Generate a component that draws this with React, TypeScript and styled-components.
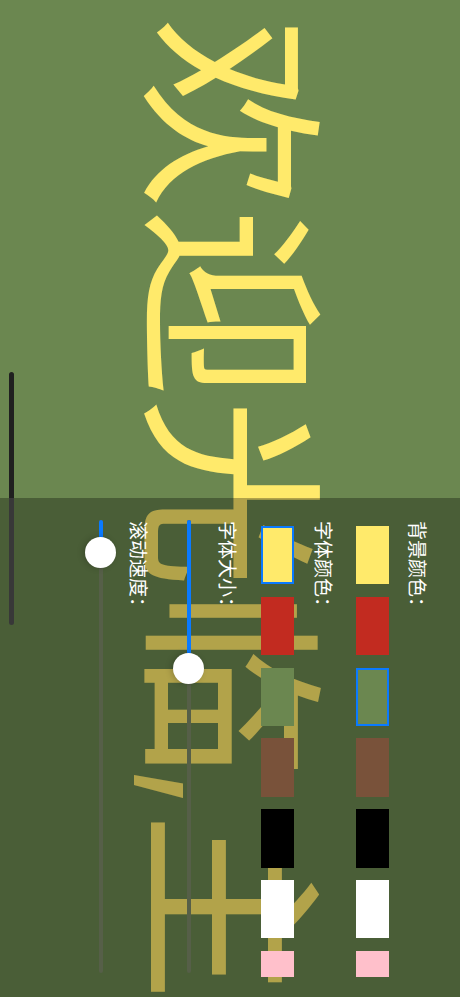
import React from "react";
import styled, { createGlobalStyle } from "styled-components";

const GlobalStyle = createGlobalStyle`
  html, body {
    margin: 0;
    padding: 0;
    background: #6b8750;
    overflow: hidden;
  }
  * { box-sizing: border-box; }
`;

const Viewport = styled.div`
  width: 460px;
  height: 997px;
  overflow: hidden;
  position: relative;
`;

const Stage = styled.div`
  width: 997px;
  height: 460px;
  position: relative;
  overflow: hidden;
  background: #6b8750;
  transform: translateX(460px) rotate(90deg);
  transform-origin: 0 0;
  display: flex;
  align-items: flex-start;
`;

const Marquee = styled.div`
  font-family: "Noto Sans CJK SC", "Noto Sans", sans-serif;
  font-size: 190px;
  line-height: 190px;
  color: #ffea6b;
  white-space: nowrap;
  padding-top: 123px;
  padding-left: 18px;
`;

const Comma = styled.span`
  font-family: Inter, "Noto Sans", sans-serif;
  font-weight: 300;
  vertical-align: 5px;
  margin-left: -16px;
  margin-right: -4px;
`;

const Panel = styled.div`
  position: absolute;
  top: 0;
  right: 0;
  width: 499px;
  height: 100%;
  background: rgba(0, 0, 0, 0.3);
  display: flex;
  flex-direction: column;
  padding: 0 18px 0 22px;
`;

const Label = styled.div<{ $gap: number }>`
  font-family: "Noto Sans CJK SC", "Noto Sans", sans-serif;
  font-size: 19px;
  line-height: 22px;
  color: #ffffff;
  margin-top: ${(p) => p.$gap}px;
  margin-left: 1px;
  white-space: nowrap;
`;

const SwatchRow = styled.div<{ $gap: number }>`
  display: flex;
  gap: 12.5px;
  margin-top: ${(p) => p.$gap}px;
  margin-left: 6px;
  width: 451px;
  overflow: hidden;
`;

const Swatch = styled.div<{ $color: string; $selected: boolean }>`
  flex: 0 0 58.33px;
  height: 33px;
  background: ${(p) => p.$color};
  border: ${(p) => (p.$selected ? "2px solid #0a7aff" : "none")};
`;

const SliderBox = styled.div<{ $gap: number }>`
  position: relative;
  width: 455px;
  height: 32px;
  margin-top: ${(p) => p.$gap}px;
`;

const Track = styled.div`
  position: absolute;
  left: 0;
  right: 2px;
  top: 14px;
  height: 4px;
  border-radius: 2px;
  background: #565f48;
`;

const Fill = styled.div`
  position: absolute;
  left: 0;
  top: 14px;
  height: 4px;
  border-radius: 2px;
  background: #0a7aff;
`;

const Thumb = styled.div`
  position: absolute;
  top: 0.5px;
  width: 31px;
  height: 31px;
  border-radius: 50%;
  background: #ffffff;
  box-shadow: 0 2px 6px rgba(0, 0, 0, 0.18), 0 0 1px rgba(0, 0, 0, 0.15);
`;

const HomeIndicator = styled.div`
  position: absolute;
  left: 372px;
  top: 445.5px;
  width: 253px;
  height: 5px;
  border-radius: 3px;
  background: linear-gradient(to right, #202020 0 50%, #383838 50% 100%);
`;

const colors = ["#ffea6b", "#c22b20", "#6b8750", "#79523a", "#000000", "#ffffff", "#ffc0cb"];

const Slider: React.FC<{ value: number; gap: number }> = ({ value, gap }) => {
  const width = 455;
  const thumb = 31;
  const center = thumb / 2 + value * (width - thumb);
  return (
    <SliderBox $gap={gap}>
      <Track />
      <Fill style={{ width: center }} />
      <Thumb style={{ left: center - thumb / 2 }} />
    </SliderBox>
  );
};

export default function App() {
  return (
    <>
      <GlobalStyle />
      <Viewport>
        <Stage>
          <Marquee>
            欢迎光临<Comma>,</Comma>主人
          </Marquee>
          <Panel>
            <Label $gap={31}>背景颜色：</Label>
            <SwatchRow $gap={18}>
              {colors.map((c, i) => (
                <Swatch key={c} $color={c} $selected={i === 2} />
              ))}
            </SwatchRow>
            <Label $gap={21}>字体颜色：</Label>
            <SwatchRow $gap={19}>
              {colors.map((c, i) => (
                <Swatch key={c} $color={c} $selected={i === 0} />
              ))}
            </SwatchRow>
            <Label $gap={22}>字体大小：</Label>
            <Slider value={0.3125} gap={12} />
            <Label $gap={23}>滚动速度：</Label>
            <Slider value={0.039} gap={11} />
          </Panel>
          <HomeIndicator />
        </Stage>
      </Viewport>
    </>
  );
}
